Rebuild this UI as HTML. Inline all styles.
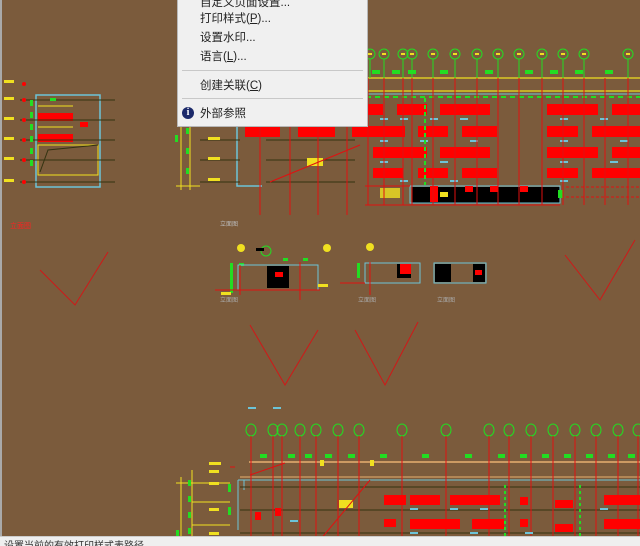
<!DOCTYPE html>
<html><head><meta charset="utf-8"><style>
html,body{margin:0;padding:0;width:640px;height:545px;overflow:hidden;background:#7b5b3c;font-family:"Liberation Sans","Noto Sans CJK SC",sans-serif}
#menu{position:absolute;left:177px;top:-6px;width:189px;height:131px;background:#f0f0f0;border:1px solid #b8b8b8;font-size:11.5px;color:#222}
#menu .it{position:absolute;left:22px}
#menu .sep{position:absolute;left:4px;right:4px;height:1px;background:#c8c8c8}
#status{position:absolute;left:0;top:536px;width:640px;height:9px;background:#efefef;border-top:1px solid #ccc;font-size:10px;color:#333;line-height:20px;overflow:hidden;padding-left:4px}
#lb{position:absolute;left:0;top:0;width:2px;height:536px;background:#a9a9a9}
</style></head><body>
<svg width="640" height="545" style="position:absolute;left:0;top:0" xmlns="http://www.w3.org/2000/svg">
<g stroke="#d01818" stroke-width="1" fill="none">
<polyline points="40,270 75,305 108,252"/>
<polyline points="250,325 285,385 318,330"/>
<polyline points="355,330 385,385 418,322"/>
<polyline points="565,255 600,300 635,240"/>
</g>
<g>
<rect x="36" y="95" width="64" height="92" fill="none" stroke="#6cc4d8" stroke-width="1.5"/>
<rect x="38" y="145" width="60" height="30" fill="none" stroke="#f0e020"/>
<path d="M40 172 L48 150 L98 145" stroke="#331" fill="none"/>
<rect x="38" y="113" width="35" height="8" fill="#ff0000"/>
<rect x="38" y="134" width="35" height="8" fill="#ff0000"/>
<path d="M38 106 L73 106 M38 127 L73 127" stroke="#f0e020"/>
<g stroke="#331"><path d="M20 100H115M20 120H115M20 140H115M20 160H115M20 182H115"/></g>
<g fill="#22dd22"><rect x="30" y="100" width="3" height="6"/><rect x="30" y="112" width="3" height="6"/><rect x="30" y="124" width="3" height="6"/><rect x="30" y="136" width="3" height="6"/><rect x="30" y="148" width="3" height="6"/><rect x="30" y="160" width="3" height="6"/><rect x="50" y="98" width="6" height="3"/></g>
<g fill="#ff0000"><rect x="80" y="122" width="8" height="5"/><circle cx="24" cy="84" r="2"/><circle cx="24" cy="100" r="2"/><circle cx="24" cy="120" r="2"/><circle cx="24" cy="140" r="2"/><circle cx="24" cy="160" r="2"/><circle cx="24" cy="182" r="2"/></g>
<g fill="#f0e020"><rect x="4" y="80" width="10" height="3"/><rect x="4" y="97" width="10" height="3"/><rect x="4" y="117" width="10" height="3"/><rect x="4" y="137" width="10" height="3"/><rect x="4" y="157" width="10" height="3"/><rect x="4" y="179" width="10" height="3"/></g>
<text x="10" y="228" fill="#ff2020" font-size="7">立面图</text>
</g>
<g>
<path d="M237 120V186H262" stroke="#6cc4d8" fill="none" stroke-width="1.5"/>
<path d="M181 100V190M190 100V190" stroke="#f0e020"/>
<path d="M176 186H200" stroke="#f0e020"/>
<g fill="#22dd22"><rect x="175" y="135" width="3" height="7"/><rect x="186" y="128" width="3" height="6"/><rect x="186" y="148" width="3" height="6"/><rect x="186" y="168" width="3" height="6"/></g>
<g stroke="#331"><path d="M266 140H355M266 160H355M266 182H355M200 140H240M200 160H240M200 182H240"/></g>
<g fill="#f0e020"><rect x="208" y="137" width="12" height="3"/><rect x="208" y="157" width="12" height="3"/><rect x="208" y="178" width="12" height="3"/><rect x="307" y="158" width="16" height="8"/></g>
<path d="M270 182L360 145" stroke="#e01010"/>
<text x="220" y="226" fill="#bbb" font-size="6">立面图</text>
<g fill="#22dd22"><rect x="372" y="70" width="8" height="4"/><rect x="392" y="70" width="8" height="4"/><rect x="408" y="70" width="8" height="4"/><rect x="440" y="70" width="8" height="4"/><rect x="485" y="70" width="8" height="4"/><rect x="525" y="70" width="8" height="4"/><rect x="550" y="70" width="8" height="4"/><rect x="575" y="70" width="8" height="4"/><rect x="605" y="70" width="8" height="4"/></g>
<path d="M366 78H640" stroke="#f0e020" stroke-width="1.2"/>
<path d="M366 91H640" stroke="#f0e020" stroke-width="1.2"/>
<path d="M366 94H640" stroke="#6cc4d8"/>
<path d="M366 97H640" stroke="#22dd22" stroke-dasharray="5,4" stroke-width="2"/>
<g stroke="#22dd22" fill="none" stroke-width="1">
<circle cx="370" cy="54" r="5"/><circle cx="384" cy="54" r="5"/><circle cx="403" cy="54" r="5"/><circle cx="412" cy="54" r="5"/><circle cx="433" cy="54" r="5"/><circle cx="455" cy="54" r="5"/><circle cx="477" cy="54" r="5"/><circle cx="498" cy="54" r="5"/><circle cx="519" cy="54" r="5"/><circle cx="542" cy="54" r="5"/><circle cx="563" cy="54" r="5"/><circle cx="584" cy="54" r="5"/><circle cx="628" cy="54" r="5"/>
<path d="M370 59V78M384 59V78M403 59V78M412 59V78M433 59V78M455 59V78M477 59V78M498 59V78M519 59V78M542 59V78M563 59V78M584 59V78M628 59V78"/>
</g>
<g fill="#f0e020"><rect x="368" y="53" width="4" height="2"/><rect x="382" y="53" width="4" height="2"/><rect x="401" y="53" width="4" height="2"/><rect x="410" y="53" width="4" height="2"/><rect x="431" y="53" width="4" height="2"/><rect x="453" y="53" width="4" height="2"/><rect x="475" y="53" width="4" height="2"/><rect x="496" y="53" width="4" height="2"/><rect x="517" y="53" width="4" height="2"/><rect x="540" y="53" width="4" height="2"/><rect x="561" y="53" width="4" height="2"/><rect x="582" y="53" width="4" height="2"/><rect x="626" y="53" width="4" height="2"/></g>
<g fill="#ff0000">
<rect x="367" y="104" width="16" height="11"/><rect x="397" y="104" width="30" height="11"/><rect x="440" y="104" width="50" height="11"/><rect x="547" y="104" width="51" height="11"/><rect x="612" y="104" width="28" height="11"/>
<rect x="245" y="126" width="35" height="11"/><rect x="298" y="126" width="37" height="11"/><rect x="352" y="126" width="53" height="11"/><rect x="418" y="126" width="30" height="11"/><rect x="462" y="126" width="35" height="11"/><rect x="547" y="126" width="31" height="11"/><rect x="592" y="126" width="48" height="11"/>
<rect x="373" y="147" width="54" height="11"/><rect x="440" y="147" width="50" height="11"/><rect x="547" y="147" width="51" height="11"/><rect x="612" y="147" width="28" height="11"/>
<rect x="373" y="168" width="30" height="10"/><rect x="418" y="168" width="30" height="10"/><rect x="462" y="168" width="35" height="10"/><rect x="547" y="168" width="31" height="10"/><rect x="592" y="168" width="48" height="10"/>
</g>
<g fill="#6cc4d8"><rect x="380" y="118" width="8" height="2"/><rect x="400" y="118" width="8" height="2"/><rect x="430" y="118" width="8" height="2"/><rect x="460" y="118" width="8" height="2"/><rect x="560" y="118" width="8" height="2"/><rect x="600" y="118" width="8" height="2"/><rect x="380" y="140" width="8" height="2"/><rect x="420" y="140" width="8" height="2"/><rect x="470" y="140" width="8" height="2"/><rect x="560" y="140" width="8" height="2"/><rect x="620" y="140" width="8" height="2"/><rect x="380" y="161" width="8" height="2"/><rect x="440" y="161" width="8" height="2"/><rect x="560" y="161" width="8" height="2"/><rect x="610" y="161" width="8" height="2"/><rect x="400" y="180" width="8" height="2"/><rect x="450" y="180" width="8" height="2"/><rect x="560" y="180" width="8" height="2"/></g>
<rect x="412" y="187" width="148" height="16" fill="#000"/>
<path d="M410 186H560V203H410Z" fill="none" stroke="#6cc4d8"/>
<path d="M365 186H410M365 205H560" stroke="#e01010"/>
<g fill="#ff0000"><rect x="430" y="186" width="8" height="16"/><rect x="465" y="186" width="8" height="6"/><rect x="490" y="186" width="8" height="6"/><rect x="520" y="186" width="8" height="6"/></g>
<rect x="380" y="188" width="20" height="10" fill="#f0e020" opacity=".8"/>
<rect x="440" y="192" width="8" height="5" fill="#f0e020"/>
<rect x="558" y="190" width="5" height="8" fill="#22dd22"/>
<path d="M566 187H640M566 197H640" stroke="#e01010" stroke-dasharray="3,2"/>
<g stroke="#e01010" stroke-width="1">
<path d="M260 100V215M290 100V215M318 100V215M347 100V215M368 78V205M384 78V205M403 78V205M412 78V205M433 78V205M455 78V205M477 78V205M498 78V205M519 78V205M542 78V205M563 78V205M584 78V205M605 78V205M628 78V205"/>
</g>
<path d="M425 98V185" stroke="#22dd22" stroke-dasharray="4,3" stroke-width="2"/>
</g>
<g>
<circle cx="241" cy="248" r="4" fill="#f0e020"/><circle cx="327" cy="248" r="4" fill="#f0e020"/><circle cx="370" cy="247" r="4" fill="#f0e020"/>
<circle cx="266" cy="251" r="5" fill="none" stroke="#22dd22"/><rect x="256" y="248" width="8" height="3" fill="#000"/>
<rect x="239" y="263" width="5" height="3" fill="#22dd22"/><rect x="283" y="258" width="5" height="3" fill="#22dd22"/><rect x="303" y="258" width="5" height="3" fill="#22dd22"/>
<rect x="238" y="265" width="80" height="25" fill="none" stroke="#6cc4d8"/>
<rect x="267" y="266" width="22" height="22" fill="#000"/><rect x="275" y="272" width="8" height="5" fill="#ff0000"/>
<rect x="230" y="263" width="3" height="30" fill="#22dd22"/>
<path d="M215 290H320M240 265V295M300 262V300" stroke="#e01010"/>
<rect x="221" y="292" width="10" height="3" fill="#f0e020"/><rect x="318" y="284" width="10" height="3" fill="#f0e020"/>
<text x="220" y="302" fill="#aaa" font-size="6">立面图</text>
<rect x="365" y="263" width="55" height="20" fill="none" stroke="#6cc4d8"/>
<rect x="397" y="264" width="14" height="14" fill="#000"/><rect x="400" y="264" width="11" height="10" fill="#ff0000"/>
<rect x="357" y="263" width="3" height="15" fill="#22dd22"/>
<path d="M340 283H365M370 262V295" stroke="#e01010"/>
<text x="358" y="302" fill="#aaa" font-size="6">立面图</text>
<rect x="434" y="263" width="52" height="20" fill="none" stroke="#6cc4d8"/>
<rect x="435" y="264" width="16" height="18" fill="#000"/><rect x="473" y="264" width="12" height="18" fill="#000"/><rect x="475" y="270" width="7" height="5" fill="#ff0000"/>
<text x="437" y="302" fill="#aaa" font-size="6">立面图</text>
</g>
<g>
<rect x="248" y="407" width="8" height="2" fill="#6cc4d8"/><rect x="273" y="407" width="8" height="2" fill="#6cc4d8"/>
<g stroke="#22dd22" fill="none">
<ellipse cx="251" cy="430" rx="5" ry="6"/><ellipse cx="273" cy="430" rx="5" ry="6"/><ellipse cx="282" cy="430" rx="5" ry="6"/><ellipse cx="300" cy="430" rx="5" ry="6"/><ellipse cx="316" cy="430" rx="5" ry="6"/><ellipse cx="338" cy="430" rx="5" ry="6"/><ellipse cx="359" cy="430" rx="5" ry="6"/><ellipse cx="402" cy="430" rx="5" ry="6"/><ellipse cx="446" cy="430" rx="5" ry="6"/><ellipse cx="489" cy="430" rx="5" ry="6"/><ellipse cx="509" cy="430" rx="5" ry="6"/><ellipse cx="531" cy="430" rx="5" ry="6"/><ellipse cx="553" cy="430" rx="5" ry="6"/><ellipse cx="575" cy="430" rx="5" ry="6"/><ellipse cx="596" cy="430" rx="5" ry="6"/><ellipse cx="618" cy="430" rx="5" ry="6"/><ellipse cx="638" cy="430" rx="5" ry="6"/>
</g>
<g fill="#22dd22"><rect x="260" y="454" width="7" height="4"/><rect x="288" y="454" width="7" height="4"/><rect x="305" y="454" width="7" height="4"/><rect x="325" y="454" width="7" height="4"/><rect x="348" y="454" width="7" height="4"/><rect x="380" y="454" width="7" height="4"/><rect x="422" y="454" width="7" height="4"/><rect x="465" y="454" width="7" height="4"/><rect x="498" y="454" width="7" height="4"/><rect x="520" y="454" width="7" height="4"/><rect x="542" y="454" width="7" height="4"/><rect x="564" y="454" width="7" height="4"/><rect x="586" y="454" width="7" height="4"/><rect x="608" y="454" width="7" height="4"/><rect x="628" y="454" width="7" height="4"/></g>
<path d="M249 462H640" stroke="#e8b070" stroke-width="1.5"/>
<path d="M240 477H640" stroke="#e8b070"/>
<path d="M238 480H640" stroke="#6cc4d8"/>
<path d="M181 477V545M192 470V545" stroke="#f0e020"/>
<path d="M176 483H230M192 502H230M192 525H230" stroke="#f0e020"/>
<g fill="#22dd22"><rect x="188" y="480" width="3" height="6"/><rect x="188" y="496" width="3" height="6"/><rect x="188" y="512" width="3" height="6"/><rect x="188" y="528" width="3" height="6"/><rect x="176" y="530" width="3" height="10"/><rect x="228" y="484" width="3" height="8"/><rect x="228" y="507" width="3" height="8"/></g>
<g fill="#f0e020"><rect x="209" y="462" width="12" height="3"/><rect x="209" y="470" width="10" height="3"/><rect x="209" y="482" width="10" height="3"/><rect x="209" y="508" width="10" height="3"/><rect x="209" y="532" width="10" height="3"/><rect x="339" y="500" width="14" height="8"/><rect x="320" y="460" width="4" height="6"/><rect x="370" y="460" width="4" height="6"/></g>
<path d="M238 480V530M244 480V490" stroke="#6cc4d8"/>
<g stroke="#331"><path d="M240 487H640M240 510H640M240 533H640"/></g>
<g stroke="#e01010"><path d="M251 436V536M273 436V536M282 436V536M300 436V536M316 436V536M338 436V536M359 436V536M402 436V536M446 436V536M489 436V536M509 436V536M531 436V536M553 436V536M575 436V536M596 436V536M618 436V536M638 436V536M250 475L285 463M320 540L370 480M230 467H235"/></g>
<g fill="#ff0000">
<rect x="384" y="495" width="22" height="10"/><rect x="410" y="495" width="30" height="10"/><rect x="450" y="495" width="50" height="10"/><rect x="520" y="497" width="8" height="8"/><rect x="555" y="500" width="18" height="8"/><rect x="604" y="495" width="36" height="10"/>
<rect x="384" y="519" width="12" height="8"/><rect x="410" y="519" width="50" height="10"/><rect x="472" y="519" width="32" height="10"/><rect x="520" y="519" width="8" height="8"/><rect x="555" y="524" width="18" height="8"/><rect x="604" y="519" width="36" height="10"/>
<rect x="255" y="512" width="6" height="8"/><rect x="275" y="508" width="6" height="8"/><rect x="370" y="542" width="22" height="3"/><rect x="410" y="542" width="30" height="3"/>
</g>
<g fill="#6cc4d8"><rect x="410" y="508" width="8" height="2"/><rect x="450" y="508" width="8" height="2"/><rect x="480" y="508" width="8" height="2"/><rect x="600" y="508" width="8" height="2"/><rect x="410" y="532" width="8" height="2"/><rect x="470" y="532" width="8" height="2"/><rect x="525" y="532" width="8" height="2"/><rect x="290" y="520" width="8" height="2"/></g>
<path d="M505 485V540M580 485V540" stroke="#22dd22" stroke-dasharray="3,3" stroke-width="2"/>
</g>
</svg>
<div id="lb"></div>
<div id="menu">
<div class="it" style="top:-1px">自定义页面设置...</div>
<div class="it" style="top:15px">打印样式(<u>P</u>)...</div>
<div class="it" style="top:34px">设置水印...</div>
<div class="it" style="top:53px">语言(<u>L</u>)...</div>
<div class="sep" style="top:75px"></div>
<div class="it" style="top:82px">创建关联(<u>C</u>)</div>
<div class="sep" style="top:103px"></div>
<div style="position:absolute;left:4px;top:112px;width:12px;height:12px;border-radius:50%;background:#1c2a6a;color:#fff;font-size:10px;font-weight:bold;text-align:center;line-height:12px;font-family:'Liberation Serif',serif">i</div>
<div class="it" style="top:110px">外部参照</div>
</div>
<div id="status">设置当前的有效打印样式表路径</div>
</body></html>
